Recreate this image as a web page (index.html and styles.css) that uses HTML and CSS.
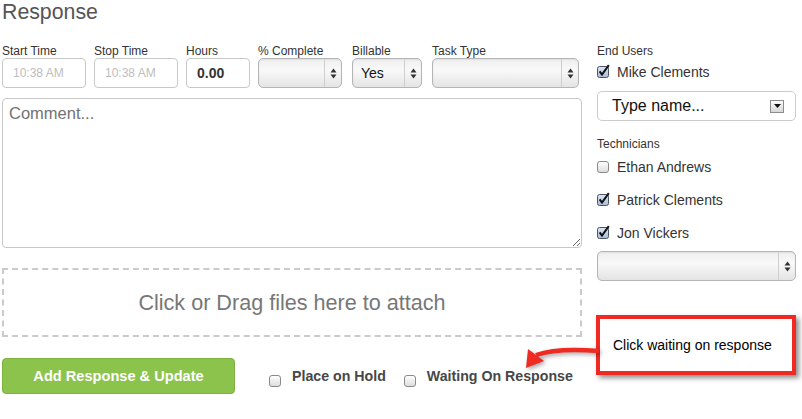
FILE: index.html
```html
<!DOCTYPE html>
<html>
<head>
<meta charset="utf-8">
<link rel="stylesheet" href="styles.css">
</head>
<body>
<div class="page">
  <div class="main">
    <h1 class="title">Response</h1>
    <div class="fields">
      <div class="field w84"><label>Start Time</label><input class="text" placeholder="10:38 AM"></div>
      <div class="field w84"><label>Stop Time</label><input class="text" placeholder="10:38 AM"></div>
      <div class="field w64"><label>Hours</label><input class="text bold" value="0.00"></div>
      <div class="field w84"><label>% Complete</label>
        <div class="select"><span class="val"></span><span class="arr"><svg width="7" height="11" viewBox="0 0 7 11"><path d="M3.5 0.5L6.5 4.5H0.5Z M3.5 10.5L6.5 6.5H0.5Z" fill="#333"/></svg></span></div>
      </div>
      <div class="field w70 shift"><label>Billable</label>
        <div class="select"><span class="val">Yes</span><span class="arr"><svg width="7" height="11" viewBox="0 0 7 11"><path d="M3.5 0.5L6.5 4.5H0.5Z M3.5 10.5L6.5 6.5H0.5Z" fill="#333"/></svg></span></div>
      </div>
      <div class="field w147 shift"><label>Task Type</label>
        <div class="select"><span class="val"></span><span class="arr"><svg width="7" height="11" viewBox="0 0 7 11"><path d="M3.5 0.5L6.5 4.5H0.5Z M3.5 10.5L6.5 6.5H0.5Z" fill="#333"/></svg></span></div>
      </div>
    </div>
    <textarea class="comment" placeholder="Comment..."></textarea>
    <div class="dropzone">Click or Drag files here to attach</div>
    <div class="actions">
      <button class="btn">Add Response &amp; Update</button>
      <label class="flag"><svg class="cb" width="12" height="12" viewBox="0 0 12 12"><rect x="0.5" y="0.5" width="11" height="11" rx="2.5" fill="url(#g1)" stroke="#8a8a8a"/></svg>Place on Hold</label>
      <label class="flag"><svg class="cb" width="12" height="12" viewBox="0 0 12 12"><rect x="0.5" y="0.5" width="11" height="11" rx="2.5" fill="url(#g1)" stroke="#8a8a8a"/></svg>Waiting On Response</label>
    </div>
  </div>
  <div class="side">
    <div class="side-label">End Users</div>
    <label class="opt first"><svg width="13" height="14" viewBox="0 0 13 14"><rect x="0.5" y="2.5" width="11" height="11" rx="2" fill="url(#g2)" stroke="#4a5566"/><path d="M2.6 7.4L5 10.6L11.8 1.2" fill="none" stroke="#111" stroke-width="2"/></svg>Mike Clements</label>
    <div class="combo"><span>Type name...</span><span class="dd"><svg width="7" height="4" viewBox="0 0 7 4"><path d="M0 0H7L3.5 4Z" fill="#111"/></svg></span></div>
    <div class="side-label tech">Technicians</div>
    <label class="opt o1"><svg width="13" height="14" viewBox="0 0 13 14"><rect x="0.5" y="2.5" width="11" height="11" rx="2.5" fill="url(#g1)" stroke="#8a8a8a"/></svg>Ethan Andrews</label>
    <label class="opt o2"><svg width="13" height="14" viewBox="0 0 13 14"><rect x="0.5" y="2.5" width="11" height="11" rx="2" fill="url(#g2)" stroke="#4a5566"/><path d="M2.6 7.4L5 10.6L11.8 1.2" fill="none" stroke="#111" stroke-width="2"/></svg>Patrick Clements</label>
    <label class="opt o2"><svg width="13" height="14" viewBox="0 0 13 14"><rect x="0.5" y="2.5" width="11" height="11" rx="2" fill="url(#g2)" stroke="#4a5566"/><path d="M2.6 7.4L5 10.6L11.8 1.2" fill="none" stroke="#111" stroke-width="2"/></svg>Jon Vickers</label>
    <div class="select wide"><span class="val"></span><span class="arr"><svg width="7" height="11" viewBox="0 0 7 11"><path d="M3.5 0.5L6.5 4.5H0.5Z M3.5 10.5L6.5 6.5H0.5Z" fill="#333"/></svg></span></div>
  </div>
  <div class="callout">Click waiting on response</div>
  <svg class="arrow" width="90" height="36" viewBox="0 0 90 36">
    <path d="M84 11 C60 9 38 9 21 15" fill="none" stroke="#ee2a22" stroke-width="4.5"/>
    <path d="M11 28 L13 9 L29 21 Z" fill="#ee2a22"/>
  </svg>
  <svg class="defs" width="0" height="0">
    <defs>
      <linearGradient id="g1" x1="0" y1="0" x2="0" y2="1"><stop offset="0" stop-color="#ffffff"/><stop offset="1" stop-color="#dcdcdc"/></linearGradient>
      <linearGradient id="g2" x1="0" y1="0" x2="0" y2="1"><stop offset="0" stop-color="#dbe6f4"/><stop offset="1" stop-color="#a9bcd6"/></linearGradient>
    </defs>
  </svg>
</div>
</body>
</html>
```
FILE: styles.css
```css
* { box-sizing: border-box; }
body {
  margin: 0;
  font-family: "Liberation Sans", Arial, sans-serif;
  color: #333;
  background: #fff;
}
.page {
  position: relative;
  display: flex;
  gap: 15px;
  padding-left: 2px;
  width: 802px;
  height: 419px;
  overflow: hidden;
}
.main {
  width: 580px;
  flex-shrink: 0;
  display: flex;
  flex-direction: column;
}
.title {
  margin: 0;
  font-size: 21.3px;
  line-height: 24px;
  font-weight: normal;
  color: #555;
}
.fields {
  display: flex;
  gap: 8px;
  margin-top: 20px;
}
.field {
  display: flex;
  flex-direction: column;
  flex-shrink: 0;
}
.field.shift { margin-left: 2px; }
.w84 { width: 84px; }
.w64 { width: 64px; }
.w70 { width: 70px; }
.w147 { width: 147px; }
.field label {
  font-size: 12px;
  line-height: 14px;
  color: #333;
  white-space: nowrap;
}
.text {
  width: 100%;
  height: 30px;
  border: 1px solid #c8c8c8;
  border-radius: 4px;
  padding: 0 10px;
  font: 12px "Liberation Sans", Arial, sans-serif;
  color: #333;
  outline: none;
}
.text::placeholder { color: #bdbdbd; }
.text.bold { font-weight: bold; font-size: 14px; }
.select {
  height: 30px;
  border: 1px solid #b5b5b5;
  border-radius: 5px;
  background: linear-gradient(#efefef, #f9f9f9 40%, #e4e4e4);
  box-shadow: inset 0 1px 2px rgba(0,0,0,0.07);
  display: flex;
  align-items: center;
}
.select .val {
  flex: 1;
  padding-left: 8px;
  font-size: 14px;
  color: #111;
}
.select .arr {
  width: 17px;
  height: 100%;
  border-left: 1px solid #cfcfcf;
  display: flex;
  align-items: center;
  justify-content: center;
}
.select.wide { margin-top: 8px; }
.comment {
  margin-top: 10px;
  width: 580px;
  height: 150px;
  border: 1px solid #c8c8c8;
  border-radius: 4px;
  padding: 4px 6px;
  font: 16.5px/20px "Liberation Sans", Arial, sans-serif;
  color: #333;
  resize: both;
  outline: none;
}
.comment::placeholder { color: #727272; }
.dropzone {
  margin-top: 20px;
  height: 69px;
  border: 2px dashed #cacaca;
  display: flex;
  align-items: center;
  justify-content: center;
  font-size: 21.6px;
  line-height: 24px;
  color: #777;
  white-space: nowrap;
}
.actions {
  margin-top: 21px;
  display: flex;
  align-items: center;
}
.btn {
  flex-shrink: 0;
  width: 233px;
  height: 36px;
  margin-right: 34px;
  background: #8cc34c;
  border: 1px solid #7db23f;
  border-radius: 4px;
  color: #fff;
  font: bold 14.6px "Liberation Sans", Arial, sans-serif;
  white-space: nowrap;
}
.flag {
  flex-shrink: 0;
  display: flex;
  align-items: center;
  font-size: 14.2px;
  font-weight: bold;
  line-height: 20px;
  color: #474747;
  margin-right: 18px;
  white-space: nowrap;
}
.flag .cb {
  flex-shrink: 0;
  margin-top: 9px;
  margin-right: 11px;
}
.side {
  width: 199px;
  flex-shrink: 0;
  padding-top: 44px;
  display: flex;
  flex-direction: column;
}
.side-label {
  font-size: 12px;
  line-height: 14px;
  color: #333;
}
.side-label.tech { margin-top: 16px; }
.opt {
  display: flex;
  align-items: center;
  gap: 7px;
  font-size: 14px;
  line-height: 20px;
  height: 20px;
  color: #333;
  white-space: nowrap;
}
.opt svg { margin-top: -2px; flex-shrink: 0; }
.opt.first { margin-top: 4px; }
.opt.o1 { margin-top: 6px; }
.opt.o2 { margin-top: 13px; }
.combo {
  margin-top: 9px;
  height: 30px;
  border: 1px solid #cccccc;
  border-radius: 5px;
  display: flex;
  align-items: center;
  justify-content: space-between;
  padding: 0 11px 0 14px;
  font-size: 16px;
  color: #111;
}
.dd {
  width: 14px;
  height: 13px;
  border: 1px solid #8c8c8c;
  background: linear-gradient(#fdfdfd, #d6d6d6);
  display: flex;
  align-items: center;
  justify-content: center;
}
.callout {
  position: absolute;
  left: 596px;
  top: 315px;
  width: 200px;
  height: 60px;
  border: 4px solid #ee2a22;
  background: #fff;
  box-shadow: 3px 3px 5px rgba(0,0,0,0.45);
  display: flex;
  align-items: center;
  padding-left: 13px;
  font-size: 14px;
  color: #000;
  white-space: nowrap;
}
.arrow {
  position: absolute;
  left: 515px;
  top: 340px;
  filter: drop-shadow(2px 2px 2px rgba(0,0,0,0.35));
}
.defs { position: absolute; }
```
